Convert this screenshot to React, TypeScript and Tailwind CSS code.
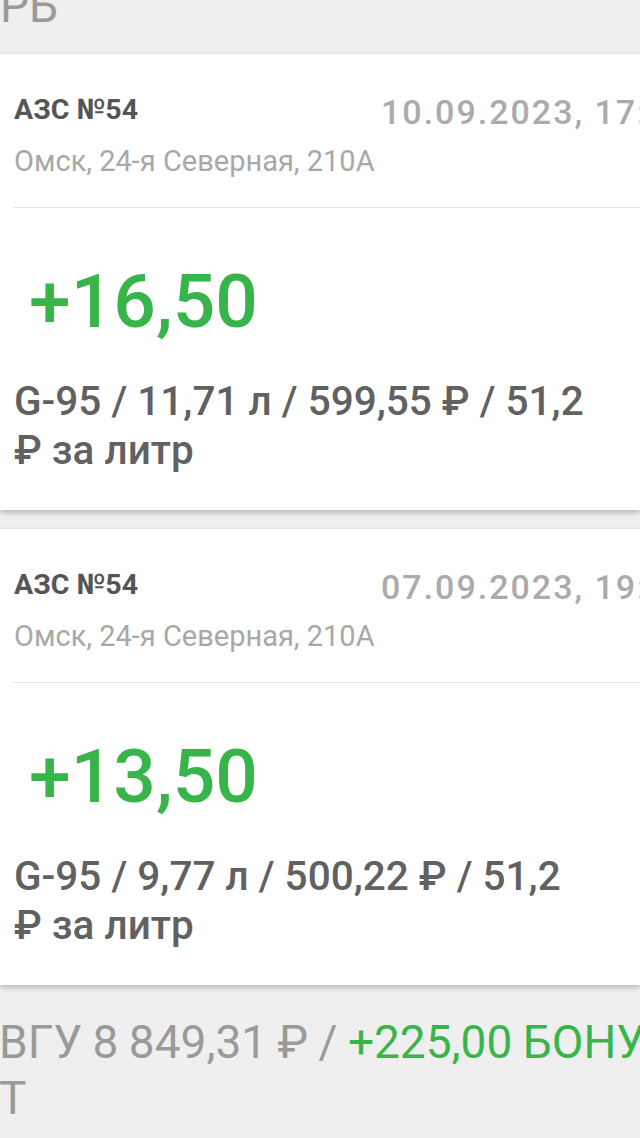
const font = { fontFamily: "Roboto, 'Noto Sans', sans-serif" };

interface Txn {
  station: string;
  date: string;
  address: string;
  bonus: string;
  details: string;
}

const txns: Txn[] = [
  {
    station: "АЗС №54",
    date: "10.09.2023, 17:42",
    address: "Омск, 24-я Северная, 210А",
    bonus: "+16,50",
    details: "G-95 / 11,71 л / 599,55 ₽ / 51,2 ₽ за литр",
  },
  {
    station: "АЗС №54",
    date: "07.09.2023, 19:15",
    address: "Омск, 24-я Северная, 210А",
    bonus: "+13,50",
    details: "G-95 / 9,77 л / 500,22 ₽ / 51,2 ₽ за литр",
  },
];

function TxnCard({ t }: { t: Txn }) {
  return (
    <div className="bg-white border-t border-[#e4e4e4] shadow-[0_3px_5px_rgba(0,0,0,0.22)] h-[457px] pl-[14px] overflow-hidden">
      <div className="flex items-start pt-[42px] h-[70px] w-[720px]">
        <div className="text-[28.5px] leading-none font-bold text-[#555555] w-[367px] shrink-0">
          {t.station}
        </div>
        <div className="text-[34px] leading-none font-medium tracking-[2px] text-[#ababab] whitespace-nowrap -mt-px">
          {t.date}
        </div>
      </div>
      <div className="mt-[23px] text-[29px] leading-none text-[#a8a8a8] whitespace-nowrap">
        {t.address}
      </div>
      <div className="mt-[31px] h-px bg-[#e6e6e6] -mr-[14px] ml-[-1px]" />
      <div className="mt-[56px] ml-[15px] text-[75px] leading-none font-medium text-[#38b54a]">
        {t.bonus}
      </div>
      <div className="mt-[38px] text-[40.5px] leading-[49px] font-medium text-[#616161] w-[575px]">
        {t.details}
      </div>
    </div>
  );
}

export default function App() {
  return (
    <div style={font} className="w-[640px] h-[1138px] bg-[#efefef] overflow-hidden">
      <div className="h-[53px] overflow-hidden">
        <div className="-mt-[17px] text-[46px] leading-none text-[#9a9a9a]">РБ</div>
      </div>
      <TxnCard t={txns[0]} />
      <div className="h-[18px]" />
      <TxnCard t={txns[1]} />
      <div className="pt-[29px] text-[46px] leading-[56px] text-[#9a9a9a] [word-spacing:-1px] w-[660px] -ml-[1px]">
        ВГУ 8 849,31 ₽ / <span className="text-[#38b54a]">+225,00 БОНУ</span>
        <br />
        Т
      </div>
    </div>
  );
}
